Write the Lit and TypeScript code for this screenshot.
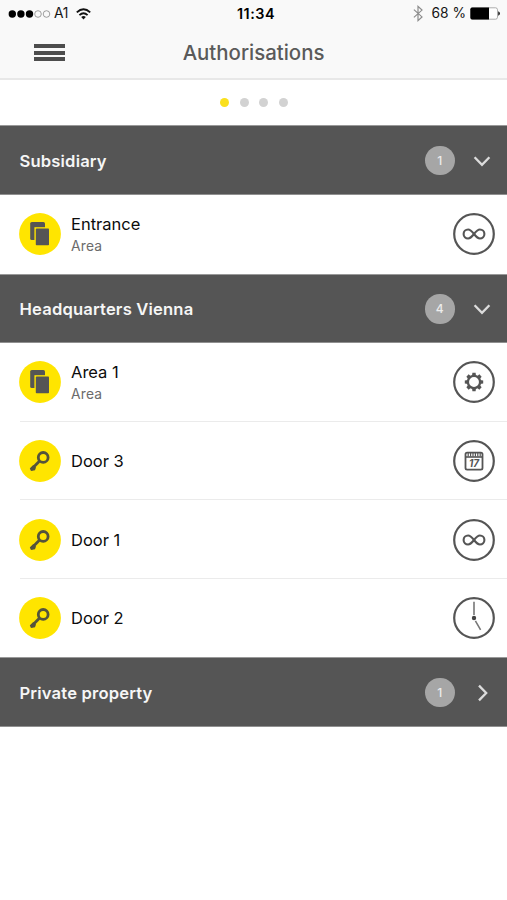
import { LitElement, html, css, svg } from "lit";
import { customElement, property } from "lit/decorators.js";

type Kind = "area" | "door";
type Schedule = "always" | "custom" | "calendar" | "clock";
interface Item { name: string; kind: Kind; schedule: Schedule; }
interface Group { title: string; count: number; open: boolean; items: Item[]; }

const groups: Group[] = [
  { title: "Subsidiary", count: 1, open: true, items: [{ name: "Entrance", kind: "area", schedule: "always" }] },
  {
    title: "Headquarters Vienna", count: 4, open: true, items: [
      { name: "Area 1", kind: "area", schedule: "custom" },
      { name: "Door 3", kind: "door", schedule: "calendar" },
      { name: "Door 1", kind: "door", schedule: "always" },
      { name: "Door 2", kind: "door", schedule: "clock" },
    ],
  },
  { title: "Private property", count: 1, open: false, items: [] },
];

const kindIcons = {
  area: svg`
    <rect x="11.2" y="9" width="14.8" height="18" rx="1.6" fill="#555"/>
    <path d="M15.4 14.2h14.4v19H15.4z" fill="#ffe500"/>
    <rect x="16.8" y="15.6" width="13.2" height="16.6" rx="0.8" fill="#555"/>`,
  door: svg`
    <circle cx="24.2" cy="17.4" r="4.9" fill="none" stroke="#54543c" stroke-width="2.8"/>
    <path d="M20.6 21.1L12.2 29.4" stroke="#54543c" stroke-width="2.8" fill="none"/>
    <path d="M14.2 25L10.8 28.4L12 30.9L16 30.3L17 27.6Z" fill="#54543c"/>`,
};

const teeth = [0, 45, 90, 135, 180, 225, 270, 315];
const scheduleIcons = {
  always: svg`<path d="M21 21C18.8 18.2 17.4 16.5 15.1 16.5A4.5 4.5 0 0 0 15.1 25.5C17.4 25.5 18.8 23.8 21 21C23.2 18.2 24.6 16.5 26.9 16.5A4.5 4.5 0 0 1 26.9 25.5C24.6 25.5 23.2 23.8 21 21Z" fill="none" stroke="#555" stroke-width="2.1"/>`,
  custom: svg`
    <circle cx="21" cy="21" r="6.1" fill="none" stroke="#555" stroke-width="2.3"/>
    ${teeth.map((a) => svg`<path d="M19 14.8L19.4 11.8h3.2L23 14.8z" fill="#555" transform="rotate(${a} 21 21)"/>`)}`,
  calendar: svg`
    <rect x="12.5" y="12.6" width="17" height="17" rx="1.6" fill="none" stroke="#555" stroke-width="1.8"/>
    <path d="M12 17h18" stroke="#555" stroke-width="1.6"/>
    <path d="M15.2 12v4.4M17.6 12v4.4M20 12v4.4M22.4 12v4.4M24.8 12v4.4M27.2 12v4.4" stroke="#555" stroke-width="1.2"/>
    <text x="21" y="27.4" text-anchor="middle" font-family="Inter, sans-serif" font-size="10" font-weight="700" font-style="italic" fill="#555">17</text>`,
  clock: svg`
    <path d="M21 18V4.8M22.4 23.8L27.6 32.8" stroke="#777" stroke-width="1.6" fill="none"/>
    <circle cx="21" cy="21" r="2.2" fill="#444"/>`,
};

@customElement("status-bar")
class StatusBar extends LitElement {
  static styles = css`
    :host { display: grid; grid-template-columns: 1fr auto 1fr; align-items: center; height: 27px; padding: 0 7px 0 8px; color: #151515; font-size: 13.8px; line-height: 17px; }
    .side { display: flex; align-items: center; }
    .right { justify-content: flex-end; }
    .carrier { margin-left: 3px; letter-spacing: -0.2px; }
    .wifi { margin-left: 8px; }
    .time { font-weight: 600; font-size: 14.4px; letter-spacing: 0.55px; color: #000; padding-left: 4px; }
    .pct { margin: 0 4px 0 8px; white-space: nowrap; }
    svg { display: block; }
  `;
  render() {
    return html`
      <div class="side">
        <svg width="43" height="10" viewBox="0 0 43 10">
          ${[4.3, 12.9, 21.5].map((x) => svg`<circle cx=${x} cy="5" r="3.7" fill="#000"/>`)}
          ${[30, 38.5].map((x) => svg`<circle cx=${x} cy="5" r="3.3" fill="none" stroke="#777" stroke-width="0.7"/>`)}
        </svg>
        <span class="carrier">A1</span>
        <svg class="wifi" width="15" height="12" viewBox="0 0 15 12" fill="none" stroke="#111" stroke-width="1.9">
          <path d="M0.8 4.4Q7.5 -1.8 14.2 4.4M3.4 7.1Q7.5 3.5 11.6 7.1"/>
          <path d="M5.2 9Q7.5 7 9.8 9L7.5 11.4Z" fill="#111" stroke="none"/>
        </svg>
      </div>
      <div class="time">11:34</div>
      <div class="side right">
        <svg width="10" height="17" viewBox="0 0 10 17"><path d="M0.9 4.6L9 11.9L5 15.6V1.4L9 5.1L0.9 12.4" fill="none" stroke="#8c8c8c" stroke-width="1.2"/></svg>
        <span class="pct">68 %</span>
        <svg width="30" height="13" viewBox="0 0 30 13">
          <rect x="0.5" y="0.8" width="27" height="11.4" rx="2" fill="#fff" stroke="#999" stroke-width="0.8"/>
          <path d="M2 0.6H19V12.4H2Q0.4 12.4 0.4 10.8V2.2Q0.4 0.6 2 0.6Z" fill="#000"/>
          <path d="M28.2 4.2Q30 5 30 6.5T28.2 8.8Z" fill="#222"/>
        </svg>
      </div>`;
  }
}

@customElement("access-row")
class AccessRow extends LitElement {
  @property({ attribute: false }) item!: Item;
  @property({ type: Boolean }) last = false;
  static styles = css`
    :host { display: block; padding-left: 20px; }
    .row { box-sizing: border-box; height: 100%; display: flex; align-items: center; padding: 1px 12px 0 0; border-bottom: 1px solid #ebebeb; }
    .row.last { border-bottom-color: transparent; }
    svg { display: block; flex: none; width: 42px; height: 42px; }
    .kind { margin-left: -1px; }
    .text { flex: 1; margin-left: 10px; }
    .text.double { padding-top: 1.6px; }
    .name { color: #0c0c0c; font-size: 16.5px; line-height: 22px; }
    .sub { color: #6b6b6b; font-size: 13.8px; line-height: 22px; letter-spacing: 0.2px; }
  `;
  render() {
    const { name, kind, schedule } = this.item;
    const area = kind === "area";
    return html`
      <div class="row ${this.last ? "last" : ""}">
        <svg class="kind" viewBox="0 0 42 42"><circle cx="21" cy="21" r="20.9" fill="#ffe500"/>${kindIcons[kind]}</svg>
        <div class="text ${area ? "double" : ""}">
          <div class="name">${name}</div>
          ${area ? html`<div class="sub">Area</div>` : ""}
        </div>
        <svg viewBox="0 0 42 42"><circle cx="21" cy="21" r="19.8" fill="#fff" stroke="#555" stroke-width="2.2"/>${scheduleIcons[schedule]}</svg>
      </div>`;
  }
}

@customElement("access-group")
class AccessGroup extends LitElement {
  @property({ attribute: false }) group!: Group;
  static styles = css`
    :host { display: block; }
    .head { box-sizing: border-box; height: 69.7px; display: flex; align-items: center; padding: 1px 16px 0 19.5px; background: #555; border-top: 1px solid #999; border-bottom: 1px solid #909090; color: #f6f6f6; }
    .title { flex: 1; font-size: 16.6px; font-weight: 600; line-height: 22px; letter-spacing: 0.17px; }
    .count { width: 29.5px; height: 29.5px; border-radius: 50%; background: #a6a6a6; color: #ededed; display: flex; align-items: center; justify-content: center; font-size: 12px; font-weight: 500; }
    .chevron { display: block; margin-left: 18.5px; }
    .items { display: grid; grid-auto-rows: 78.55px; }
  `;
  render() {
    const g = this.group;
    return html`
      <div class="head">
        <div class="title">${g.title}</div>
        <div class="count">${g.count}</div>
        <svg class="chevron" width="18" height="18" viewBox="0 0 18 18" fill="none" stroke="#dcdcdc" stroke-width="2.3">
          <path d=${g.open ? "M1.6 5.2L9 12.8L16.4 5.2" : "M6 1.6L13.2 9L6 16.4"}/>
        </svg>
      </div>
      <div class="items">${g.items.map((it, i) => html`<access-row .item=${it} ?last=${i === g.items.length - 1}></access-row>`)}</div>`;
  }
}

@customElement("app-root")
class AppRoot extends LitElement {
  static styles = css`
    :host { display: block; height: 900px; overflow: hidden; background: #fff; font-family: Inter, "Liberation Sans", sans-serif; }
    .top { box-sizing: border-box; height: 80px; background: #f9f9f9; border-bottom: 2px solid #e8e8e8; }
    .nav { display: grid; grid-template-columns: 100px 1fr 100px; align-items: center; height: 51px; }
    .menu { display: grid; gap: 2.6px; width: 31px; margin-left: 34px; }
    .bar { height: 4px; background: #4d4d4d; }
    h1 { margin: 0; text-align: center; font-size: 20.4px; font-weight: 500; line-height: 26px; color: #5a5a5a; }
    .pager { display: flex; justify-content: center; align-items: center; gap: 10.6px; height: 45.27px; padding-left: 1px; }
    .dot { width: 9px; height: 9px; border-radius: 50%; background: #d2d2d2; }
    .dot.on { background: #fae01e; }
  `;
  render() {
    return html`
      <div class="top">
        <status-bar></status-bar>
        <div class="nav">
          <div class="menu"><div class="bar"></div><div class="bar"></div><div class="bar"></div></div>
          <h1>Authorisations</h1>
        </div>
      </div>
      <div class="pager"><div class="dot on"></div><div class="dot"></div><div class="dot"></div><div class="dot"></div></div>
      ${groups.map((g) => html`<access-group .group=${g}></access-group>`)}`;
  }
}
